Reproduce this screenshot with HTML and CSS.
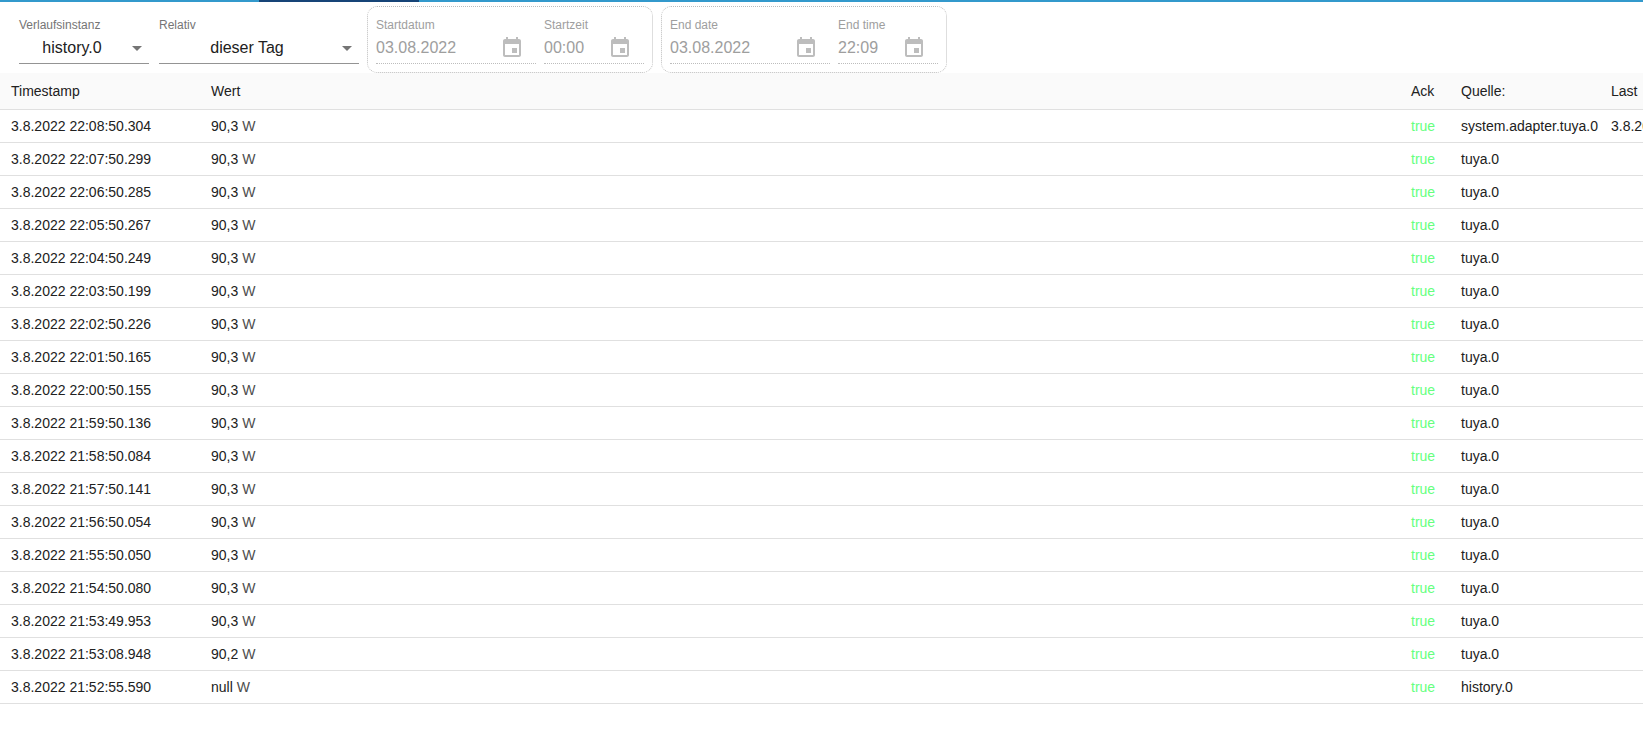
FILE: index.html
```html
<!DOCTYPE html>
<html lang="de">
<head>
  <meta charset="UTF-8">
  <meta name="viewport" content="width=device-width, initial-scale=1.0">
  <title>history.0</title>
  <link rel="stylesheet" href="styles.css">
</head>
<body>
  <div class="tab-line"><div class="tab-indicator"></div></div>

  <div class="toolbar">
    <div class="field instance">
      <label for="instance">Verlaufsinstanz</label>
      <div class="control">
        <select id="instance">
          <option>history.0</option>
        </select>
        <svg class="arrow" viewBox="0 0 24 24"><path d="M7 10l5 5 5-5z"/></svg>
      </div>
    </div>
    <div class="field relative">
      <label for="relative">Relativ</label>
      <div class="control">
        <select id="relative">
          <option>dieser Tag</option>
        </select>
        <svg class="arrow" viewBox="0 0 24 24"><path d="M7 10l5 5 5-5z"/></svg>
      </div>
    </div>

    <div class="range">
      <div class="field date disabled">
        <label for="startDate">Startdatum</label>
        <div class="control">
          <input type="text" id="startDate" value="03.08.2022" disabled>
          <button disabled aria-label="Startdatum"><svg viewBox="0 0 24 24"><path d="M17 12h-5v5h5v-5zM16 1v2H8V1H6v2H5c-1.11 0-1.99.9-1.99 2L3 19c0 1.1.89 2 2 2h14c1.1 0 2-.9 2-2V5c0-1.1-.9-2-2-2h-1V1h-2zm3 18H5V8h14v11z"/></svg></button>
        </div>
      </div>
      <div class="field time disabled">
        <label for="startTime">Startzeit</label>
        <div class="control">
          <input type="text" id="startTime" value="00:00" disabled>
          <button disabled aria-label="Startzeit"><svg viewBox="0 0 24 24"><path d="M17 12h-5v5h5v-5zM16 1v2H8V1H6v2H5c-1.11 0-1.99.9-1.99 2L3 19c0 1.1.89 2 2 2h14c1.1 0 2-.9 2-2V5c0-1.1-.9-2-2-2h-1V1h-2zm3 18H5V8h14v11z"/></svg></button>
        </div>
      </div>
    </div>

    <div class="range">
      <div class="field date disabled">
        <label for="endDate">End date</label>
        <div class="control">
          <input type="text" id="endDate" value="03.08.2022" disabled>
          <button disabled aria-label="End date"><svg viewBox="0 0 24 24"><path d="M17 12h-5v5h5v-5zM16 1v2H8V1H6v2H5c-1.11 0-1.99.9-1.99 2L3 19c0 1.1.89 2 2 2h14c1.1 0 2-.9 2-2V5c0-1.1-.9-2-2-2h-1V1h-2zm3 18H5V8h14v11z"/></svg></button>
        </div>
      </div>
      <div class="field time disabled">
        <label for="endTime">End time</label>
        <div class="control">
          <input type="text" id="endTime" value="22:09" disabled>
          <button disabled aria-label="End time"><svg viewBox="0 0 24 24"><path d="M17 12h-5v5h5v-5zM16 1v2H8V1H6v2H5c-1.11 0-1.99.9-1.99 2L3 19c0 1.1.89 2 2 2h14c1.1 0 2-.9 2-2V5c0-1.1-.9-2-2-2h-1V1h-2zm3 18H5V8h14v11z"/></svg></button>
        </div>
      </div>
    </div>
  </div>

  <table class="history">
    <thead>
      <tr>
        <th class="col-time">Timestamp</th>
        <th>Wert</th>
        <th class="col-ack">Ack</th>
        <th class="col-source">Quelle:</th>
        <th class="col-last">Last</th>
      </tr>
    </thead>
    <tbody id="rows"></tbody>
  </table>

  <script>
    const entries = [
      ['22:08:50.304', '90,3', 'system.adapter.tuya.0', '3.8.2022'],
      ['22:07:50.299', '90,3', 'tuya.0'],
      ['22:06:50.285', '90,3', 'tuya.0'],
      ['22:05:50.267', '90,3', 'tuya.0'],
      ['22:04:50.249', '90,3', 'tuya.0'],
      ['22:03:50.199', '90,3', 'tuya.0'],
      ['22:02:50.226', '90,3', 'tuya.0'],
      ['22:01:50.165', '90,3', 'tuya.0'],
      ['22:00:50.155', '90,3', 'tuya.0'],
      ['21:59:50.136', '90,3', 'tuya.0'],
      ['21:58:50.084', '90,3', 'tuya.0'],
      ['21:57:50.141', '90,3', 'tuya.0'],
      ['21:56:50.054', '90,3', 'tuya.0'],
      ['21:55:50.050', '90,3', 'tuya.0'],
      ['21:54:50.080', '90,3', 'tuya.0'],
      ['21:53:49.953', '90,3', 'tuya.0'],
      ['21:53:08.948', '90,2', 'tuya.0'],
      ['21:52:55.590', 'null', 'history.0']
    ];

    document.getElementById('rows').innerHTML = entries.map(([time, value, source, last]) => `
      <tr>
        <td>3.8.2022 ${time}</td>
        <td>${value} <span class="unit">W</span></td>
        <td class="ack">true</td>
        <td>${source}</td>
        <td>${last || ''}</td>
      </tr>
    `).join('');
  </script>
</body>
</html>
```

FILE: styles.css
```css
* {
  box-sizing: border-box;
}
body {
  margin: 0;
  font-family: "Liberation Sans", Arial, sans-serif;
  font-size: 14px;
  color: #212121;
  background-color: #fff;
  overflow-x: hidden;
}
.tab-line {
  height: 2px;
  padding-left: 259px;
  background-color: #3399cc;
}
.tab-indicator {
  width: 160px;
  height: 2px;
  background-color: #164477;
}
.toolbar {
  display: flex;
  align-items: flex-start;
  gap: 8px;
  padding: 4px 19px 0;
}
.field {
  padding-top: 10px;
}
.instance {
  width: 130px;
  margin-right: 2px;
}
.relative {
  width: 200px;
}
.date {
  width: 160px;
}
.time {
  width: 100px;
}
.field label {
  display: block;
  font-size: 12px;
  line-height: 18px;
  color: #757575;
}
.control {
  position: relative;
  display: flex;
  height: 30px;
  padding-top: 2px;
  border-bottom: 1px solid #949494;
}
.control select,
.control input {
  flex: 1;
  min-width: 0;
  height: 22px;
  margin: 0;
  padding: 0;
  border: none;
  background: none;
  font-family: inherit;
  font-size: 16px;
  color: #212121;
}
.control input {
  height: 24px;
}
.control select {
  appearance: none;
  padding-right: 24px;
  text-align-last: center;
  cursor: pointer;
}
.control svg {
  display: block;
  width: 24px;
  height: 24px;
}
.control .arrow {
  position: absolute;
  top: 2px;
  right: 0;
  fill: #757575;
  pointer-events: none;
}
.control button {
  width: 24px;
  height: 24px;
  margin-right: 12px;
  padding: 0;
  border: none;
  background: none;
}
.control button svg {
  fill: #bdbdbd;
}
.disabled label,
.disabled .control input {
  color: #9e9e9e;
}
.disabled .control {
  border-bottom: 1px dotted #bdbdbd;
}
.range {
  display: flex;
  gap: 8px;
  padding: 0 8px 8px;
  border: 1px dotted #bdbdbd;
  border-radius: 10px;
}
.range .field {
  padding-top: 9px;
}
.history {
  width: 100%;
  table-layout: fixed;
  border-collapse: separate;
  border-spacing: 0;
}
.history th,
.history td {
  padding: 4px 0 4px 11px;
  line-height: 24px;
  border-bottom: 1px solid #e0e0e0;
  text-align: left;
  font-weight: normal;
  white-space: nowrap;
  overflow: hidden;
}
.history th {
  padding-top: 6px;
  padding-bottom: 6px;
  background-color: #fafafa;
}
.history .col-time {
  width: 200px;
}
.history .col-ack {
  width: 50px;
}
.history .col-source {
  width: 150px;
}
.history .col-last {
  width: 43px;
}
.history .ack {
  color: #66ff7f;
}
.unit {
  color: #4d4d4d;
}
```
